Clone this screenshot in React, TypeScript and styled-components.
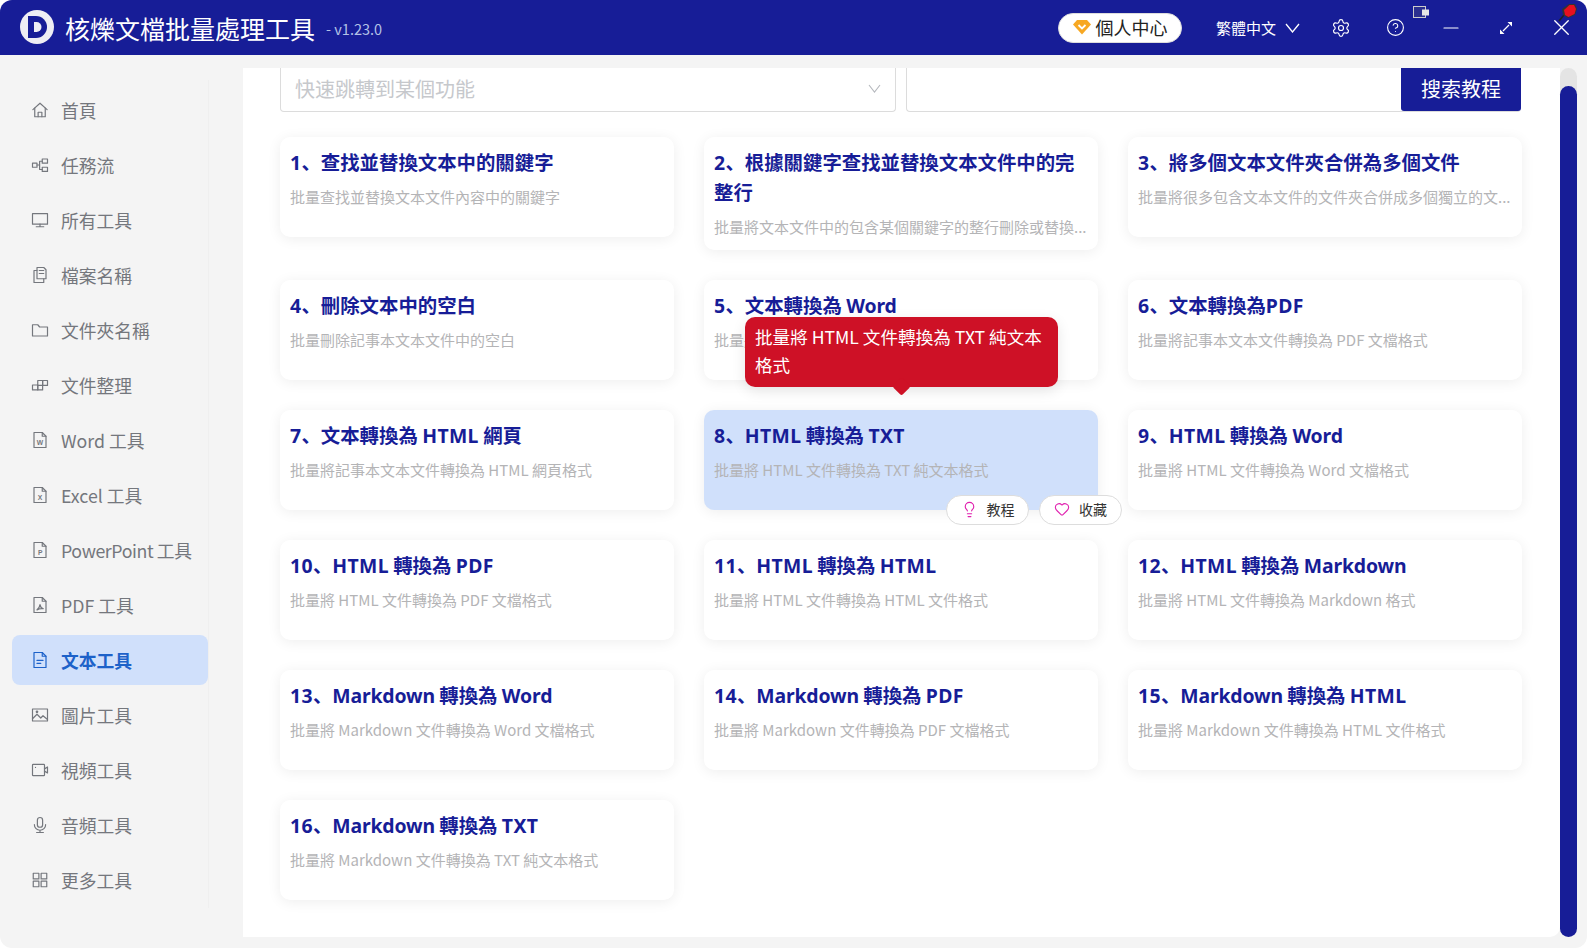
import React from 'react';
import styled, { createGlobalStyle } from 'styled-components';
import { Settings, CircleHelp, Lightbulb, Heart, Minus, X } from 'lucide-react';

const NAVY = '#171d97';
const FONT = '"Noto Sans CJK SC", "Noto Sans CJK TC", sans-serif';

const GlobalStyle = createGlobalStyle`
  html, body {
    margin: 0;
    padding: 0;
    background: #fff;
    font-family: ${FONT};
  }
  * { box-sizing: border-box; }
`;

const Window = styled.div`
  width: 1587px;
  height: 948px;
  background: #f4f4f4;
  border-radius: 12px;
  overflow: hidden;
  display: flex;
  flex-direction: column;
`;

const TitleBar = styled.header`
  height: 55px;
  flex: none;
  background: ${NAVY};
  display: flex;
  align-items: center;
  padding-left: 20px;
  color: #fff;
`;

const Logo = styled.svg`
  width: 34px;
  height: 34px;
  flex: none;
  margin-top: -1px;
`;

const AppName = styled.div`
  font-size: 25px;
  line-height: 34px;
  margin-left: 11px;
  white-space: nowrap;
`;

const Version = styled.div`
  font-size: 14.5px;
  color: #b3c2e6;
  margin-left: 11px;
  margin-top: 2px;
  white-space: nowrap;
`;

const ProfilePill = styled.div`
  margin-left: auto;
  width: 124px;
  height: 30px;
  padding-bottom: 2px;
  border-radius: 15px;
  background: #fff;
  border: 1px solid #ddd;
  color: #222;
  font-size: 18px;
  display: flex;
  align-items: center;
  justify-content: center;
  gap: 5px;
`;

const LangPicker = styled.div`
  margin-left: 34px;
  width: 84px;
  font-size: 15px;
  display: flex;
  align-items: center;
  justify-content: space-between;
`;

const BarButton = styled.div`
  position: relative;
  width: 55px;
  height: 55px;
  flex: none;
  display: flex;
  align-items: center;
  justify-content: center;
`;

const BarButtons = styled.div`
  display: flex;
  margin-left: 13px;
  margin-right: -1px;
`;

const CloseIcon = styled(X)`
  margin-left: 2px;
`;

const FloatIcon = styled.svg<{ $left: number; $top: number }>`
  position: absolute;
  left: ${p => p.$left}px;
  top: ${p => p.$top}px;
`;

const Body = styled.div`
  flex: 1;
  min-height: 0;
  display: flex;
  align-items: flex-start;
`;

const Sidebar = styled.nav`
  width: 209px;
  height: 828px;
  flex: none;
  margin-top: 25px;
  padding: 5px 0 0 12px;
  border-right: 1px solid #efefef;
  display: flex;
  flex-direction: column;
  gap: 5px;
`;

const NavItem = styled.div<{ $active?: boolean; $tight?: boolean }>`
  width: 196px;
  height: 50px;
  flex: none;
  border-radius: 8px;
  padding: 0 0 1px 19px;
  display: flex;
  align-items: center;
  gap: 12px;
  font-size: 17.75px;
  white-space: nowrap;
  letter-spacing: ${p => (p.$tight ? '-0.4px' : 'normal')};
  font-weight: ${p => (p.$active ? 700 : 400)};
  color: ${p => (p.$active ? '#1d62c9' : '#74777d')};
  background: ${p => (p.$active ? '#d0e0fb' : 'transparent')};
`;

const NavIcon = styled.svg`
  width: 18px;
  height: 18px;
  flex: none;
  fill: none;
  stroke: currentColor;
  stroke-width: 1.6;
  stroke-linecap: round;
  stroke-linejoin: round;
`;

const DocLetter = styled.text`
  font-size: 9px;
  font-weight: 700;
  fill: currentColor;
  stroke: none;
  text-anchor: middle;
  font-family: "Liberation Sans", sans-serif;
`;

const Panel = styled.main`
  width: 1317px;
  height: 869px;
  flex: none;
  margin: 13px 0 0 34px;
  padding: 0 38px 0 37px;
  background: #fff;
  border-radius: 0 0 10px 0;
`;

const SearchRow = styled.div`
  display: flex;
  gap: 10px;
  height: 44px;
`;

const JumpSelect = styled.div`
  width: 616px;
  flex: none;
  border: 1px solid #dcdcdc;
  border-top: none;
  border-radius: 0 0 4px 4px;
  display: flex;
  align-items: center;
  justify-content: space-between;
  padding: 0 14px 2px;
  font-size: 20px;
  color: #c6c8cc;
`;

const SearchBox = styled.div`
  flex: 1;
  display: flex;
  margin-right: 1px;
  border-bottom: 1px solid #dcdcdc;
  border-left: 1px solid #dcdcdc;
  border-radius: 0 0 4px 4px;
`;

const SearchButton = styled.div`
  margin-left: auto;
  width: 120px;
  padding-bottom: 3px;
  background: ${NAVY};
  color: #fff;
  font-size: 20px;
  display: flex;
  align-items: center;
  justify-content: center;
  border-radius: 0 0 3px 3px;
`;

const CardGrid = styled.div`
  margin-top: 25px;
  display: grid;
  grid-template-columns: repeat(3, 394px);
  column-gap: 30px;
  row-gap: 30px;
  align-items: start;
`;

const Card = styled.div<{ $active?: boolean }>`
  position: relative;
  min-height: 100px;
  padding: 10px;
  border-radius: 10px;
  background: ${p => (p.$active ? '#d0e0fb' : '#fff')};
  box-shadow: 0 2px 14px rgba(0, 0, 0, 0.07);
`;

const CardTitle = styled.div`
  font-size: 19.4px;
  line-height: 30px;
  font-weight: 700;
  color: ${NAVY};
`;

const CardLatin = styled.span<{ $upper: boolean }>`
  font-family: "Noto Sans", ${FONT};
  line-height: 1;
  letter-spacing: ${p => (p.$upper ? '0.35px' : '-0.15px')};
`;

const CardDesc = styled.div`
  margin-top: 7px;
  padding-bottom: 1px;
  font-size: 15px;
  line-height: 25px;
  color: #b4b4b6;
  white-space: nowrap;
  overflow: hidden;
`;

const Tooltip = styled.div`
  position: absolute;
  left: 41px;
  bottom: 123px;
  width: 313px;
  padding: 6px 10px 8px;
  border-radius: 10px;
  background: #ce1126;
  color: #fff;
  font-size: 17.6px;
  line-height: 28px;
  z-index: 3;
  box-shadow: 0 4px 14px rgba(0, 0, 0, 0.1);

  &::after {
    content: '';
    position: absolute;
    left: 150px;
    bottom: -6px;
    width: 13px;
    height: 13px;
    background: #ce1126;
    border-radius: 2px;
    transform: rotate(45deg);
  }
`;

const CardActions = styled.div`
  position: absolute;
  top: 85px;
  left: 242px;
  display: flex;
  gap: 10px;
  z-index: 2;
`;

const ActionPill = styled.div`
  width: 83px;
  height: 30px;
  padding-bottom: 2px;
  border-radius: 15px;
  background: #fff;
  border: 1px solid #ddd;
  color: #333;
  font-size: 14px;
  display: flex;
  align-items: center;
  justify-content: center;
  gap: 9px;
`;

const ScrollTrack = styled.div`
  width: 17px;
  height: 869px;
  flex: none;
  margin-top: 13px;
  padding-top: 18px;
  background: #e4e4e4;
  border-radius: 9px;
`;

const ScrollThumb = styled.div`
  height: 100%;
  background: ${NAVY};
  border-radius: 9px;
`;

const navItems: { label: string; icon: React.ReactNode; active?: boolean; tight?: boolean }[] = [
  { label: '首頁', icon: <><path d="M2.500 11.500 12 3l9.500 8.500" /><path d="M5 9.500V21h14V9.500" /><path d="M9.500 21v-6h5v6" /></> },
  { label: '任務流', icon: <><rect x="2" y="9.500" width="6" height="5.500" /><rect x="15" y="4" width="7" height="5.500" /><rect x="15" y="15" width="7" height="5.500" /><path d="M8 12h3.500M11.500 7h3.500M11.500 18h3.500M11.500 7v11" /></> },
  { label: '所有工具', icon: <><rect x="2" y="3.500" width="20" height="14" /><path d="M12 17.500V21M7 21h10" /></> },
  { label: '檔案名稱', icon: <><path d="M8 6H4v16h13v-5" /><path d="M8 2v15h12V5l-3-3z" /><path d="M11 6h6M11 10h6" /></> },
  { label: '文件夾名稱', icon: <path d="M2 5h7l2.500 3H22v12H2z" /> },
  { label: '文件整理', icon: <><rect x="2" y="12" width="7" height="6.500" /><rect x="9" y="6" width="6.500" height="6.500" /><rect x="15.500" y="6" width="6.500" height="6.500" /><path d="M9 12v6.500h6.500v-6" /></> },
  { label: 'Word 工具', icon: <><path d="M4 2h11l5 5v15H4z" /><path d="M15 2v5h5" /><DocLetter x="12" y="18">W</DocLetter></> },
  { label: 'Excel 工具', icon: <><path d="M4 2h11l5 5v15H4z" /><path d="M15 2v5h5" /><DocLetter x="12" y="18">X</DocLetter></> },
  { label: 'PowerPoint 工具', tight: true, icon: <><path d="M4 2h11l5 5v15H4z" /><path d="M15 2v5h5" /><DocLetter x="12" y="18">P</DocLetter></> },
  { label: 'PDF 工具', icon: <><path d="M4 2h11l5 5v15H4z" /><path d="M15 2v5h5" /><path d="M8 18.500c2.500-1.500 3.500-4 4-7 .5 3 2 5 4.500 5.500-3-.5-6 0-8.500 1.500z" /></> },
  { label: '文本工具', active: true, icon: <><path d="M4 2h11l5 5v15H4z" /><path d="M15 2v5h5" /><path d="M8 12.500h8M8 16.500h5" /></> },
  { label: '圖片工具', icon: <><rect x="2" y="4" width="20" height="16" /><path d="m2 17 6-6 5 5 3-3 6 5" /><circle cx="8" cy="7.800" r="1" /></> },
  { label: '視頻工具', icon: <><rect x="2" y="4.500" width="16" height="15" rx="1" /><path d="M18 10.500 22 8v8l-4-2.500" /><path d="M6 8.500h.01" /></> },
  { label: '音頻工具', icon: <><rect x="8.500" y="2" width="7" height="13" rx="3.500" /><path d="M4.500 11.500a7.500 7.500 0 0 0 15 0M12 19v3M7.500 22h9" /></> },
  { label: '更多工具', icon: <><rect x="3" y="3" width="7.500" height="7.500" /><rect x="13.500" y="3" width="7.500" height="7.500" /><rect x="3" y="13.500" width="7.500" height="7.500" /><rect x="13.500" y="13.500" width="7.500" height="7.500" /></> },
];

const tools: { title: string; desc: string; active?: boolean }[] = [
  { title: '1、查找並替換文本中的關鍵字', desc: '批量查找並替換文本文件內容中的關鍵字' },
  { title: '2、根據關鍵字查找並替換文本文件中的完整行', desc: '批量將文本文件中的包含某個關鍵字的整行刪除或替換...' },
  { title: '3、將多個文本文件夾合併為多個文件', desc: '批量將很多包含文本文件的文件夾合併成多個獨立的文...' },
  { title: '4、刪除文本中的空白', desc: '批量刪除記事本文本文件中的空白' },
  { title: '5、文本轉換為 Word', desc: '批量將記事本文本文件轉換為 Word 文檔格式' },
  { title: '6、文本轉換為PDF', desc: '批量將記事本文本文件轉換為 PDF 文檔格式' },
  { title: '7、文本轉換為 HTML 網頁', desc: '批量將記事本文本文件轉換為 HTML 網頁格式' },
  { title: '8、HTML 轉換為 TXT', desc: '批量將 HTML 文件轉換為 TXT 純文本格式', active: true },
  { title: '9、HTML 轉換為 Word', desc: '批量將 HTML 文件轉換為 Word 文檔格式' },
  { title: '10、HTML 轉換為 PDF', desc: '批量將 HTML 文件轉換為 PDF 文檔格式' },
  { title: '11、HTML 轉換為 HTML', desc: '批量將 HTML 文件轉換為 HTML 文件格式' },
  { title: '12、HTML 轉換為 Markdown', desc: '批量將 HTML 文件轉換為 Markdown 格式' },
  { title: '13、Markdown 轉換為 Word', desc: '批量將 Markdown 文件轉換為 Word 文檔格式' },
  { title: '14、Markdown 轉換為 PDF', desc: '批量將 Markdown 文件轉換為 PDF 文檔格式' },
  { title: '15、Markdown 轉換為 HTML', desc: '批量將 Markdown 文件轉換為 HTML 文件格式' },
  { title: '16、Markdown 轉換為 TXT', desc: '批量將 Markdown 文件轉換為 TXT 純文本格式' },
];

// latin runs in the titles use a wider face than the chinese text around them
const renderTitle = (title: string) =>
  title.split(/([A-Za-z0-9]+)/).map((part, i) =>
    /^[A-Za-z0-9]+$/.test(part)
      ? <CardLatin key={i} $upper={part === part.toUpperCase()}>{part}</CardLatin>
      : part
  );

const App = () => {
  return (
    <Window>
      <GlobalStyle />
      <TitleBar>
        <Logo viewBox="0 0 34 34">
          <circle cx="17" cy="17" r="17" fill="#eeeef4" />
          <path d="M8 6h8a11 11 0 0 1 0 22H8z" fill={NAVY} />
          <path d="M14 12h2.500a5 5 0 0 1 0 10H14z" fill="#eeeef4" />
        </Logo>
        <AppName>核爍文檔批量處理工具</AppName>
        <Version>- v1.23.0</Version>
        <ProfilePill>
          <svg width="18" height="16" viewBox="0 0 18 16">
            <path d="M4 1h10l4 4.500L9 15.500 0 5.500z" fill="#f7a823" />
            <path d="m5.500 6 3.500 3.500L12.500 6" fill="none" stroke="#fff" strokeWidth="1.800" />
          </svg>
          個人中心
        </ProfilePill>
        <LangPicker>
          繁體中文
          <svg width="15" height="10" viewBox="0 0 15 10" fill="none" stroke="#fff" strokeWidth="1.300">
            <path d="m1 1 6.500 8L14 1" />
          </svg>
        </LangPicker>
        <BarButtons>
          <BarButton><Settings size={20} strokeWidth={1.4} /></BarButton>
          <BarButton>
            <CircleHelp size={19} strokeWidth={1.4} />
            <FloatIcon $left={45} $top={6} width="17" height="13" viewBox="0 0 17 13">
              <rect x="0.500" y="0.500" width="12" height="11" fill="#2b2f8f" stroke="#ccc" />
              <rect x="9" y="3.500" width="7" height="6" fill="#e6e6e6" />
            </FloatIcon>
          </BarButton>
          <BarButton><Minus size={24} strokeWidth={1.200} /></BarButton>
          <BarButton>
            <svg width="14" height="14" viewBox="0 0 14 14">
              <path d="M8.500 1h4.500v4.500zM1 8.500V13h4.500z" fill="#fff" />
              <path d="M10 4 4 10" stroke="#fff" strokeWidth="1.300" />
            </svg>
          </BarButton>
          <BarButton>
            <CloseIcon size={27} strokeWidth={1.200} />
            <FloatIcon $left={25} $top={2} width="20" height="20" viewBox="0 0 20 20">
              <path d="M1 19 6 13" stroke="#222" strokeWidth="1.500" />
              <path d="M4 7 11 2h6l2 5-2 6-7 3-5-3z" fill="#333" />
              <path d="M6 8 11.500 3H16l2 4-1.500 5-6 3-3.500-2z" fill="#e8101f" />
            </FloatIcon>
          </BarButton>
        </BarButtons>
      </TitleBar>
      <Body>
        <Sidebar>
          {navItems.map(item => (
            <NavItem key={item.label} $active={item.active} $tight={item.tight}>
              <NavIcon viewBox="0 0 24 24">{item.icon}</NavIcon>
              {item.label}
            </NavItem>
          ))}
        </Sidebar>
        <Panel>
          <SearchRow>
            <JumpSelect>
              快速跳轉到某個功能
              <svg width="13" height="9" viewBox="0 0 13 9" fill="none" stroke="#b5b8bd" strokeWidth="1.100">
                <path d="m1 1 5.500 7L12 1" />
              </svg>
            </JumpSelect>
            <SearchBox>
              <SearchButton>搜索教程</SearchButton>
            </SearchBox>
          </SearchRow>
          <CardGrid>
            {tools.map(tool => (
              <Card key={tool.title} $active={tool.active}>
                <CardTitle>{renderTitle(tool.title)}</CardTitle>
                <CardDesc>{tool.desc}</CardDesc>
                {tool.active && (
                  <>
                    <Tooltip>批量將 HTML 文件轉換為 TXT 純文本格式</Tooltip>
                    <CardActions>
                      <ActionPill>
                        <Lightbulb size={17} strokeWidth={1.6} color="#e01fae" />
                        教程
                      </ActionPill>
                      <ActionPill>
                        <Heart size={16} strokeWidth={1.6} color="#e01fae" />
                        收藏
                      </ActionPill>
                    </CardActions>
                  </>
                )}
              </Card>
            ))}
          </CardGrid>
        </Panel>
        <ScrollTrack>
          <ScrollThumb />
        </ScrollTrack>
      </Body>
    </Window>
  );
};

export default App;
